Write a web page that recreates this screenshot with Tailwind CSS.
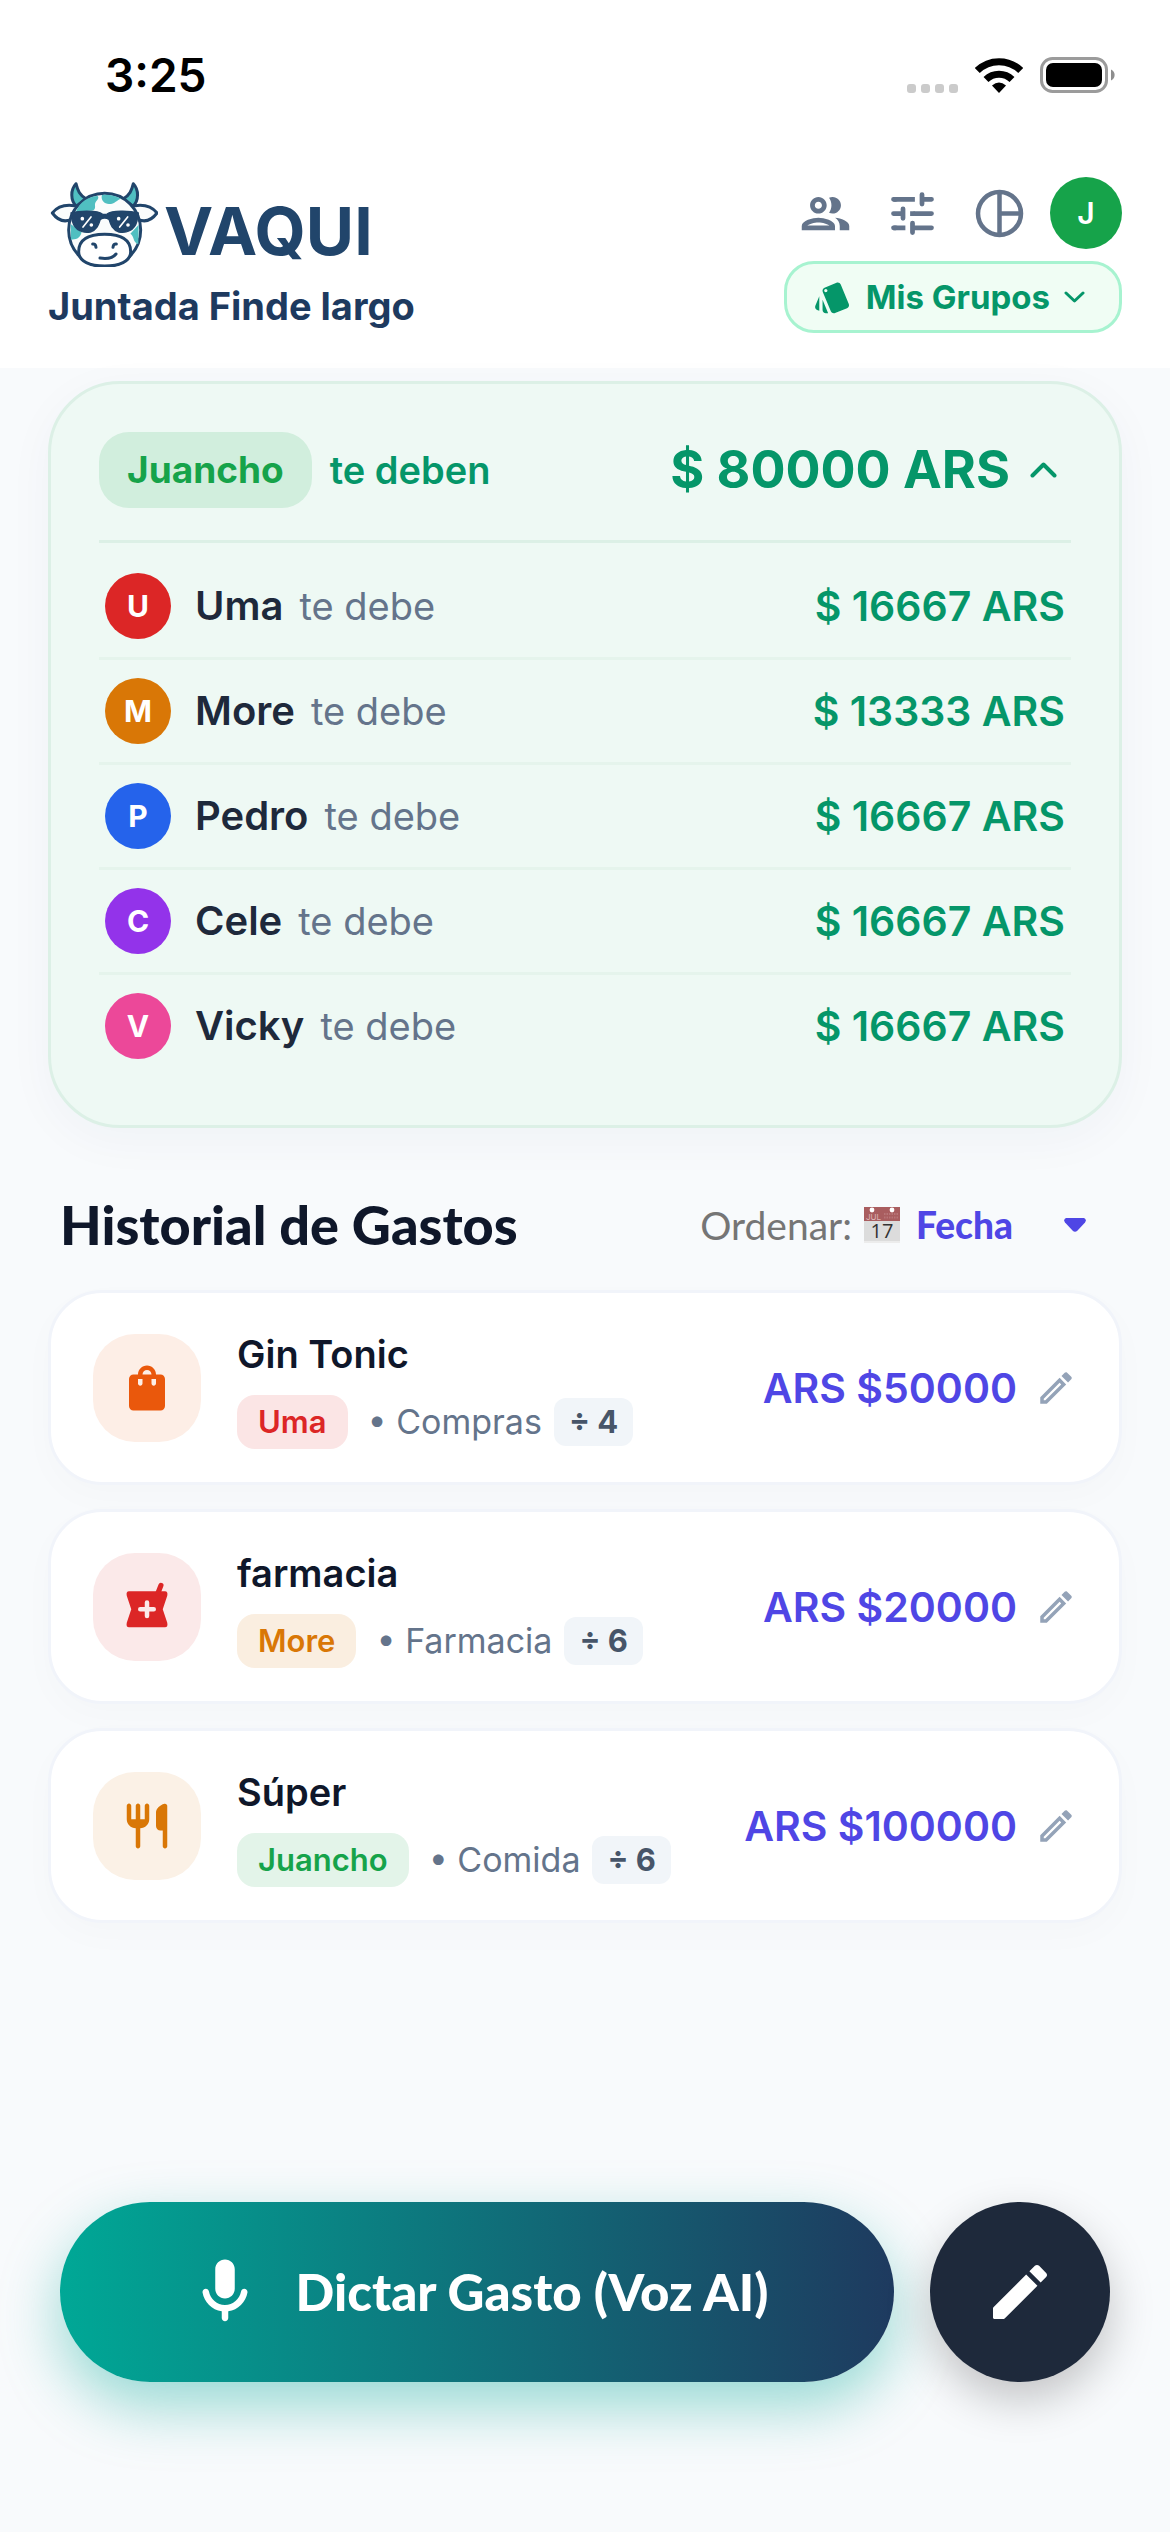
<!DOCTYPE html>
<html lang="es">
<head>
<meta charset="utf-8">
<meta name="viewport" content="width=device-width, initial-scale=1">
<title>Vaqui – Juntada Finde largo</title>
<script src="https://cdn.jsdelivr.net/npm/@tailwindcss/browser@4"></script>
</head>
<body class="flex min-h-screen flex-col bg-[#f8fafc] font-['Inter',sans-serif] text-[#0f172a]">

<!-- Status bar -->
<div class="flex h-[150px] items-center justify-between bg-white pr-[54px] pl-[105px]">
  <span class="text-[46px] leading-[54px] font-semibold text-black">3:25</span>
  <div class="flex items-center gap-[17px]">
    <div class="flex gap-[5px] pt-[26px]">
      <i class="size-[9px] rounded-[3px] bg-[#cbcbcb]"></i><i class="size-[9px] rounded-[3px] bg-[#cbcbcb]"></i><i class="size-[9px] rounded-[3px] bg-[#cbcbcb]"></i><i class="size-[9px] rounded-[3px] bg-[#cbcbcb]"></i>
    </div>
    <svg class="h-9 w-12" viewBox="0 0 48 36" fill="none" stroke="#000" stroke-width="7"><path d="M2.3 13.5A31 31 0 0 1 45.700 13.5"/><path d="M11 22.500A18.500 18.500 0 0 1 37 22.500"/><path d="M24 36L17 28.500Q24 22.500 31 28.500Z" fill="#000" stroke="none"/></svg>
    <svg class="h-9 w-[76px]" viewBox="0 0 76 36"><rect x="1.500" y="1.500" width="65" height="33" rx="11" fill="none" stroke="#9b9b9b" stroke-width="3"/><rect x="6" y="6" width="56" height="24" rx="7" fill="#000"/><path d="M71 12.500a6 6 0 0 1 0 11z" fill="#8e8e8e"/></svg>
  </div>
</div>

<header class="flex justify-between bg-white px-12 pt-[27px] pb-[35px]">
  <div class="flex flex-col gap-3">
    <div class="flex h-[90px] items-end gap-[6px]">
      <svg class="h-[90px] w-[110px]" viewBox="57 52 330 270" fill="none" stroke="#21456b" stroke-width="9" stroke-linecap="round" stroke-linejoin="round" role="img" aria-label="Vaca con lentes">
        <path d="M141 72C124 90 124 122 142 140L172 118C152 108 146 92 141 72Z" fill="#50bfc1"/>
        <path d="M313 72C330 90 330 122 312 140L282 118C302 108 308 92 313 72Z" fill="#50bfc1"/>
        <path d="M136 138C108 134 84 142 70 160C86 182 106 188 126 180M318 138C346 134 370 142 384 160C368 182 348 188 328 180" fill="#fafcfc"/>
        <ellipse cx="227" cy="211" rx="108" ry="110" fill="#fafcfc"/>
        <g fill="#50bfc1" stroke="none">
          <path d="M140 158C152 125 180 110 206 109C214 118 196 124 198 138C200 150 192 154 180 153Z"/>
          <path d="M219 106C240 104 258 108 276 117C264 120 258 133 240 133C226 133 214 120 219 106Z"/>
          <path d="M125 193L158 218C152 238 140 240 126 240Z"/>
          <path d="M329 195L304 222C316 228 310 246 328 254Z"/>
        </g>
        <path d="M126 160C155 152 205 152 220 163Q227 166 234 163C249 152 299 152 328 160L324 184C316 214 290 221 270 217C250 211 245 195 240 179Q227 171 214 179C209 195 204 211 184 217C164 221 138 214 130 184Z" fill="#21456b" stroke-width="4"/>
        <g stroke="#fff" stroke-width="5"><path d="M186 172L162 202M296 172L272 202"/><circle cx="160" cy="177" r="3" fill="#fff"/><circle cx="187" cy="196" r="3" fill="#fff"/><circle cx="269" cy="177" r="3" fill="#fff"/><circle cx="297" cy="196" r="3" fill="#fff"/></g>
        <path d="M149 276C149 242 175 224 227 224C279 224 305 242 305 276C305 306 270 319 227 319C184 319 149 306 149 276Z" fill="#fff"/>
        <path d="M191 253Q200 252 201 263M262 253Q253 252 252 263M213 295Q248 300 261 283"/>
      </svg>
      <span class="text-[66px] leading-[72px] font-bold text-[#21456b]">VAQUI</span>
    </div>
    <h1 class="text-[38px] leading-[54px] font-bold text-[#1e3a5f]">Juntada Finde largo</h1>
  </div>
  <div class="flex flex-col items-end gap-3">
    <nav class="flex gap-[15px] text-[#64748b]" aria-label="Acciones">
      <button type="button" aria-label="Miembros" class="grid size-[72px] place-items-center"><svg class="size-[57px]" viewBox="0 0 24 24" fill="currentColor"><path d="M9 13.750c-2.340 0-7 1.170-7 3.500V19h14v-1.750c0-2.330-4.660-3.500-7-3.500zM4.340 17c.84-.58 2.870-1.250 4.660-1.250s3.820.67 4.660 1.250H4.340zM9 12c1.930 0 3.500-1.570 3.500-3.500S10.930 5 9 5 5.500 6.570 5.500 8.500 7.070 12 9 12zm0-5c.83 0 1.500.67 1.500 1.500S9.830 10 9 10s-1.500-.67-1.500-1.500S8.170 7 9 7zm7.040 6.810c1.160.84 1.960 1.960 1.960 3.440V19h4v-1.750c0-2.020-3.500-3.170-5.960-3.440zM15 12c1.930 0 3.500-1.570 3.500-3.500S16.930 5 15 5c-.54 0-1.040.13-1.500.35.63.89 1 1.980 1 3.150s-.37 2.260-1 3.150c.46.22.96.35 1.500.35z"/></svg></button>
      <button type="button" aria-label="Ajustes" class="grid size-[72px] place-items-center"><svg class="size-[57px]" viewBox="0 0 24 24" fill="none" stroke="currentColor" stroke-width="2" stroke-linecap="round"><path d="M16 4v4M16 6h4M4 12h4M8 10v4M12 16v4M12 18h8"/><path d="M4 6h9M4 18h5M11 12h2" stroke-linecap="butt"/><path d="M4 6h1M4 18h1M13 12h7"/></svg></button>
      <button type="button" aria-label="Estadísticas" class="grid size-[72px] place-items-center"><svg class="size-[57px]" viewBox="0 0 24 24" fill="none" stroke="currentColor" stroke-width="1.900"><circle cx="12" cy="12" r="9.050"/><path d="M12 3v18M12 12h9"/></svg></button>
      <button type="button" aria-label="Perfil de Juancho" class="grid size-[72px] place-items-center rounded-full bg-[#16a34a] text-[30px] font-semibold text-white">J</button>
    </nav>
    <button type="button" class="flex h-[72px] items-center gap-[14px] rounded-[30px] border-3 border-[#a7f3d0] bg-[#f0fdf4] pr-[34px] pl-[26px] text-[#059669]">
      <svg class="size-[39px]" viewBox="0 0 24 24" fill="currentColor"><path d="M2.530 19.650l1.340.56v-9.030l-2.430 5.860c-.41 1.020.08 2.190 1.090 2.610zm19.500-3.700L17.070 3.980c-.31-.75-1.040-1.210-1.810-1.230-.26 0-.53.04-.79.15L7.100 5.950c-.75.31-1.210 1.030-1.230 1.800-.01.27.04.54.15.8l4.960 11.970c.31.76 1.050 1.220 1.830 1.230.26 0 .52-.05.77-.15l7.360-3.050c1.020-.42 1.510-1.590 1.090-2.600zM7.880 8.750c-.55 0-1-.45-1-1s.45-1 1-1 1 .45 1 1-.45 1-1 1zm-2 11c0 1.100.9 2 2 2h1.450l-3.450-8.340v6.340z"/></svg>
      <span class="text-[33px] leading-10 font-bold">Mis Grupos</span>
      <svg class="h-3 w-[21px]" viewBox="0 0 21 12" fill="none" stroke="currentColor" stroke-width="3" stroke-linecap="round" stroke-linejoin="round"><path d="M2 2l8.500 8L19 2"/></svg>
    </button>
  </div>
</header>

<main class="px-12 pt-[13px]">
  <!-- Balance -->
  <section class="rounded-[72px] border-3 border-[#dcf0e6] bg-[#eef9f4] p-12 shadow-[0_12px_48px_rgba(30,58,95,0.04)]">
    <button type="button" aria-expanded="true" class="flex w-full items-center justify-between border-b-3 border-[#dcf0e6] pb-8 text-[#059669]">
      <span class="flex items-center gap-[18px]">
        <span class="rounded-[30px] bg-[#d1eedd] px-7 py-4 text-[37px] leading-[44px] font-bold text-[#16a34a]">Juancho</span>
        <span class="text-[38px] leading-[44px] font-semibold">te deben</span>
      </span>
      <span class="flex items-center gap-5 pr-[14px]">
        <span class="text-[52px] leading-[66px] font-bold">$ 80000 ARS</span>
        <svg class="h-4 w-[27px]" viewBox="0 0 27 16" fill="none" stroke="currentColor" stroke-width="4" stroke-linecap="round" stroke-linejoin="round"><path d="M2.500 13.500l11-11 11 11"/></svg>
      </span>
    </button>
    <ul class="divide-y-3 divide-[#e5f4ec] pt-3">
      <li class="flex items-center px-[6px] py-[18px]"><span class="mr-6 grid size-[66px] place-items-center rounded-full bg-[#dc2626] text-[30px] font-bold text-white">U</span><span class="text-[40px] leading-[48px] font-semibold text-[#1e293b]">Uma</span><span class="ml-4 text-[38px] leading-[48px] text-[#64748b]">te debe</span><span class="ml-auto text-[41px] leading-[48px] font-semibold text-[#059669]">$ 16667 ARS</span></li>
      <li class="flex items-center px-[6px] py-[18px]"><span class="mr-6 grid size-[66px] place-items-center rounded-full bg-[#d97706] text-[30px] font-bold text-white">M</span><span class="text-[40px] leading-[48px] font-semibold text-[#1e293b]">More</span><span class="ml-4 text-[38px] leading-[48px] text-[#64748b]">te debe</span><span class="ml-auto text-[41px] leading-[48px] font-semibold text-[#059669]">$ 13333 ARS</span></li>
      <li class="flex items-center px-[6px] py-[18px]"><span class="mr-6 grid size-[66px] place-items-center rounded-full bg-[#2563eb] text-[30px] font-bold text-white">P</span><span class="text-[40px] leading-[48px] font-semibold text-[#1e293b]">Pedro</span><span class="ml-4 text-[38px] leading-[48px] text-[#64748b]">te debe</span><span class="ml-auto text-[41px] leading-[48px] font-semibold text-[#059669]">$ 16667 ARS</span></li>
      <li class="flex items-center px-[6px] py-[18px]"><span class="mr-6 grid size-[66px] place-items-center rounded-full bg-[#9333ea] text-[30px] font-bold text-white">C</span><span class="text-[40px] leading-[48px] font-semibold text-[#1e293b]">Cele</span><span class="ml-4 text-[38px] leading-[48px] text-[#64748b]">te debe</span><span class="ml-auto text-[41px] leading-[48px] font-semibold text-[#059669]">$ 16667 ARS</span></li>
      <li class="flex items-center px-[6px] py-[18px]"><span class="mr-6 grid size-[66px] place-items-center rounded-full bg-[#ec4899] text-[30px] font-bold text-white">V</span><span class="text-[40px] leading-[48px] font-semibold text-[#1e293b]">Vicky</span><span class="ml-4 text-[38px] leading-[48px] text-[#64748b]">te debe</span><span class="ml-auto text-[41px] leading-[48px] font-semibold text-[#059669]">$ 16667 ARS</span></li>
    </ul>
  </section>

  <!-- Expense history -->
  <div class="flex h-[162px] items-center justify-between pt-8 pr-9 pl-3 font-['Lato',sans-serif]">
    <h2 class="text-[54px] leading-[66px] font-black">Historial de Gastos</h2>
    <div class="flex items-center">
      <label for="orden" class="mr-3 text-[39px] leading-[48px] text-[#757575]">Ordenar:</label>
      <svg class="mr-4 size-9" viewBox="0 0 36 36" aria-hidden="true"><path d="M0 0h36v36H0z" fill="#dcdcdc"/><path d="M0 0h36v14H0z" fill="#a95d5f"/><path d="M0 35h36" stroke="#ececec" stroke-width="2"/><circle cx="8" cy="3" r="2.400" fill="#fff"/><circle cx="28" cy="3" r="2.400" fill="#fff"/><path d="M20 7h14M20 10.500h14" stroke="#b77577" stroke-width="2" stroke-dasharray="1.500 1"/><text x="2" y="12.500" font-size="8" fill="#dfb5b6" font-family="Inter,sans-serif">JUL</text><text x="18" y="31" font-size="20" fill="#333" text-anchor="middle" font-family="Open Sans,sans-serif">17</text></svg>
      <div class="grid items-center">
        <select id="orden" class="col-start-1 row-start-1 w-[170px] appearance-none bg-transparent text-[37px] leading-[48px] font-black text-[#4f46e5]"><option>Fecha</option><option>Monto</option></select>
        <svg class="pointer-events-none col-start-1 row-start-1 h-[14px] w-[22px] justify-self-end" viewBox="0 0 22 14" fill="#4f46e5"><path d="M2 0h18q3 1.500 1 4.500l-7.500 8q-2.500 2.500-5 0l-7.500-8Q-1 1.500 2 0z"/></svg>
      </div>
    </div>
  </div>

  <ul class="flex flex-col gap-6">
    <li class="flex h-[195px] items-center rounded-[54px] border-3 border-[#f1f4fa] bg-white px-[42px] shadow-[0_12px_36px_rgba(15,23,42,0.02)]">
      <span class="mr-9 grid size-[108px] place-items-center rounded-[42px] bg-[#fdeee6]"><svg class="size-[54px]" viewBox="0 0 24 24" fill="#ea580c"><path d="M18 6h-2c0-2.210-1.790-4-4-4S8 3.790 8 6H6c-1.100 0-2 .9-2 2v12c0 1.100.9 2 2 2h12c1.100 0 2-.9 2-2V8c0-1.100-.9-2-2-2zm-8 4c0 .55-.45 1-1 1s-1-.45-1-1V8h2v2zm2-6c1.100 0 2 .9 2 2h-4c0-1.100.9-2 2-2zm4 6c0 .55-.45 1-1 1s-1-.45-1-1V8h2v2z"/></svg></span>
      <div class="flex flex-col gap-3">
        <h3 class="text-[38px] leading-[57px] font-semibold">Gin Tonic</h3>
        <div class="flex items-center">
          <span class="rounded-[18px] bg-[#fbe5e5] px-[21px] text-[31px] leading-[54px] font-semibold text-[#dc2626]">Uma</span>
          <span class="mr-3 ml-5 text-[34px] leading-[48px] text-[#64748b]">• Compras</span>
          <span class="rounded-xl bg-[#f1f5f9] px-[15px] text-[31px] leading-[48px] font-bold text-[#475569]">÷ 4</span>
        </div>
      </div>
      <span class="mr-[18px] ml-auto text-[41px] leading-[54px] font-semibold text-[#4f46e5]">ARS $50000</span>
      <button type="button" aria-label="Editar Gin Tonic"><svg class="size-[42px]" viewBox="0 0 24 24" fill="#94a3b8"><path d="M14.060 9.020l.92.92L5.920 19H5v-.92l9.060-9.060M17.660 3c-.25 0-.51.1-.7.29l-1.830 1.830 3.750 3.750 1.830-1.830c.39-.39.39-1.020 0-1.410l-2.340-2.340c-.2-.2-.45-.29-.71-.29zm-3.600 3.190L3 17.250V21h3.750L17.810 9.940l-3.750-3.750z"/></svg></button>
    </li>
    <li class="flex h-[195px] items-center rounded-[54px] border-3 border-[#f1f4fa] bg-white px-[42px] shadow-[0_12px_36px_rgba(15,23,42,0.02)]">
      <span class="mr-9 grid size-[108px] place-items-center rounded-[42px] bg-[#fbe9e9]"><svg class="size-[54px]" viewBox="0 0 24 24" fill="#dc2626"><path d="M4 5H20Q21.400 5 21 7L19 13L21 19Q21.400 21 20 21H4Q2.600 21 3 19L5 13L3 7Q2.600 5 4 5Z"/><path d="M16.800 6L18.200 2.400" stroke="#dc2626" stroke-width="2.300" stroke-linecap="round"/><path d="M12 10v6M9 13h6" stroke="#fbe9e9" stroke-width="2" stroke-linecap="round"/></svg></span>
      <div class="flex flex-col gap-3">
        <h3 class="text-[38px] leading-[57px] font-semibold">farmacia</h3>
        <div class="flex items-center">
          <span class="rounded-[18px] bg-[#faeee0] px-[21px] text-[31px] leading-[54px] font-semibold text-[#d97706]">More</span>
          <span class="mr-3 ml-5 text-[34px] leading-[48px] text-[#64748b]">• Farmacia</span>
          <span class="rounded-xl bg-[#f1f5f9] px-[15px] text-[31px] leading-[48px] font-bold text-[#475569]">÷ 6</span>
        </div>
      </div>
      <span class="mr-[18px] ml-auto text-[41px] leading-[54px] font-semibold text-[#4f46e5]">ARS $20000</span>
      <button type="button" aria-label="Editar farmacia"><svg class="size-[42px]" viewBox="0 0 24 24" fill="#94a3b8"><path d="M14.060 9.020l.92.92L5.920 19H5v-.92l9.060-9.060M17.660 3c-.25 0-.51.1-.7.29l-1.830 1.830 3.750 3.750 1.830-1.830c.39-.39.39-1.020 0-1.410l-2.340-2.340c-.2-.2-.45-.29-.71-.29zm-3.600 3.190L3 17.250V21h3.750L17.810 9.940l-3.750-3.750z"/></svg></button>
    </li>
    <li class="flex h-[195px] items-center rounded-[54px] border-3 border-[#f1f4fa] bg-white px-[42px] shadow-[0_12px_36px_rgba(15,23,42,0.02)]">
      <span class="mr-9 grid size-[108px] place-items-center rounded-[42px] bg-[#fbf1e6]"><svg class="size-[54px]" viewBox="0 0 24 24" fill="#d97706"><path d="M16 6v6c0 1.100.9 2 2 2h1v7c0 .55.45 1 1 1s1-.45 1-1V3.130c0-.65-.61-1.130-1.240-.98C17.600 2.680 16 4.510 16 6zm-5 3H9V3c0-.55-.45-1-1-1s-1 .45-1 1v6H5V3c0-.55-.45-1-1-1s-1 .45-1 1v6c0 2.210 1.790 4 4 4v8c0 .55.45 1 1 1s1-.45 1-1v-8c2.210 0 4-1.790 4-4V3c0-.55-.45-1-1-1s-1 .45-1 1v6z"/></svg></span>
      <div class="flex flex-col gap-3">
        <h3 class="text-[38px] leading-[57px] font-semibold">Súper</h3>
        <div class="flex items-center">
          <span class="rounded-[18px] bg-[#e3f4e9] px-[21px] text-[31px] leading-[54px] font-semibold text-[#16a34a]">Juancho</span>
          <span class="mr-3 ml-5 text-[34px] leading-[48px] text-[#64748b]">• Comida</span>
          <span class="rounded-xl bg-[#f1f5f9] px-[15px] text-[31px] leading-[48px] font-bold text-[#475569]">÷ 6</span>
        </div>
      </div>
      <span class="mr-[18px] ml-auto text-[41px] leading-[54px] font-semibold text-[#4f46e5]">ARS $100000</span>
      <button type="button" aria-label="Editar Súper"><svg class="size-[42px]" viewBox="0 0 24 24" fill="#94a3b8"><path d="M14.060 9.020l.92.92L5.920 19H5v-.92l9.060-9.060M17.660 3c-.25 0-.51.1-.7.29l-1.830 1.830 3.750 3.750 1.830-1.830c.39-.39.39-1.020 0-1.410l-2.340-2.340c-.2-.2-.45-.29-.71-.29zm-3.600 3.190L3 17.250V21h3.750L17.810 9.940l-3.750-3.750z"/></svg></button>
    </li>
  </ul>
</main>

<footer class="mt-auto flex gap-9 px-[60px] pt-12 pb-[150px]">
  <button type="button" class="flex h-[180px] flex-1 items-center justify-center gap-8 rounded-full bg-linear-to-r/srgb from-[#00a896] to-[#1e3a5f] font-['Lato',sans-serif] text-[51px] font-black text-white shadow-[0_24px_60px_rgba(0,168,150,0.4)]">
    <svg class="size-[78px]" viewBox="0 0 24 24" fill="currentColor"><path d="M12 14c1.660 0 3-1.340 3-3V5c0-1.660-1.340-3-3-3S9 3.340 9 5v6c0 1.660 1.340 3 3 3zm5.910-3c-.49 0-.9.36-.98.85C16.520 14.200 14.470 16 12 16s-4.520-1.800-4.930-4.150c-.08-.49-.49-.85-.98-.85-.61 0-1.090.54-1 1.140.49 3 2.890 5.350 5.910 5.780V20c0 .55.45 1 1 1s1-.45 1-1v-2.080c3.020-.43 5.420-2.780 5.910-5.780.1-.6-.39-1.140-1-1.140z"/></svg>
    <span>Dictar Gasto (Voz AI)</span>
  </button>
  <button type="button" aria-label="Agregar gasto manual" class="grid size-[180px] place-items-center rounded-full bg-[#1e293b] text-white shadow-[0_18px_45px_rgba(0,0,0,0.22)]">
    <svg class="size-[72px]" viewBox="0 0 24 24" fill="currentColor"><path d="M3 17.460v3.040c0 .28.22.5.5.5h3.040c.13 0 .26-.05.35-.15L17.810 9.940l-3.750-3.750L3.150 17.100c-.1.1-.15.22-.15.36zM20.710 7.040c.39-.39.39-1.020 0-1.410l-2.340-2.340c-.39-.39-1.020-.39-1.410 0l-1.830 1.830 3.750 3.750 1.830-1.830z"/></svg>
  </button>
</footer>
</body>
</html>
